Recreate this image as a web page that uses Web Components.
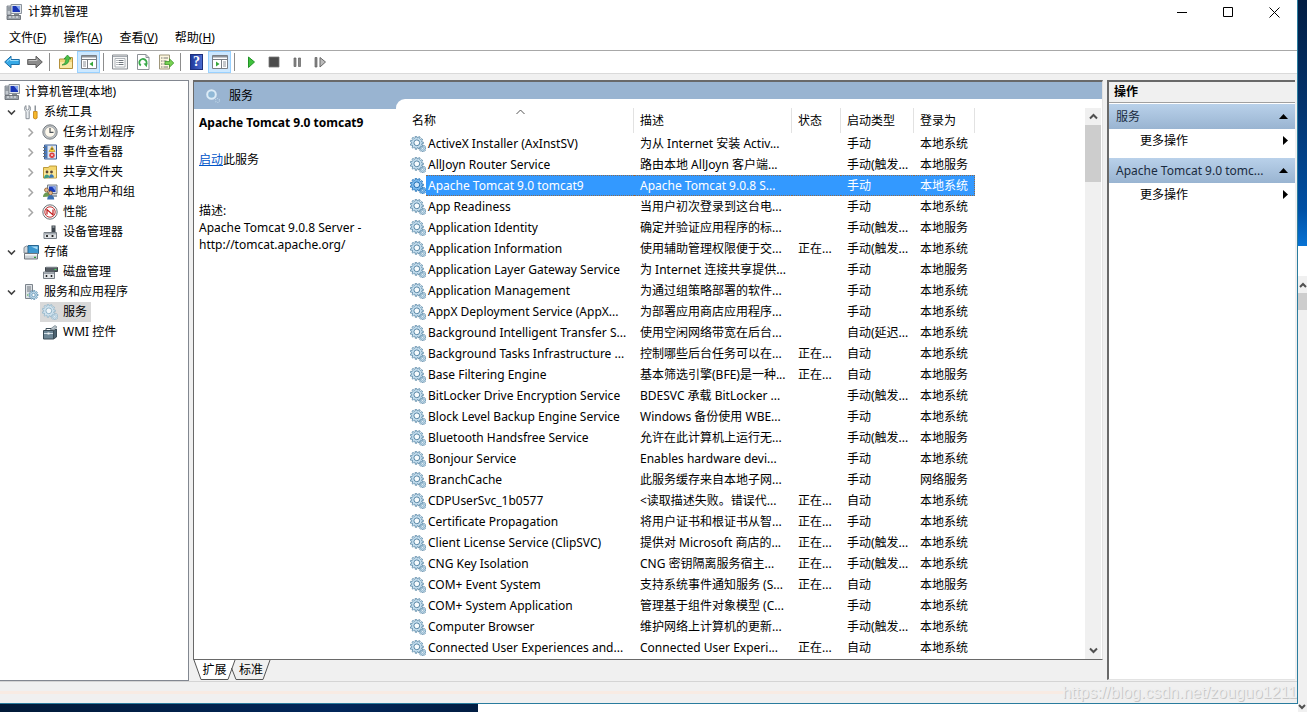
<!DOCTYPE html>
<html lang="zh-CN">
<head>
<meta charset="utf-8">
<title>计算机管理</title>
<style>
  html, body { margin: 0; }
  body {
    font-family: "Noto Sans", "Noto Sans CJK SC", sans-serif;
    font-size: 12px;
    line-height: 16px;
    color: #000;
  }
</style>
</head>
<body>
<mmc-desktop>
  <mmc-window>
    <mmc-titlebar slot="title">计算机管理</mmc-titlebar>
    <mmc-menubar slot="menu">
      <mmc-menu key="F">文件</mmc-menu>
      <mmc-menu key="A">操作</mmc-menu>
      <mmc-menu key="V">查看</mmc-menu>
      <mmc-menu key="H">帮助</mmc-menu>
    </mmc-menubar>
    <mmc-toolbar slot="tools"></mmc-toolbar>
    <mmc-tree slot="tree">
      <mmc-node level="0" icon="computer">计算机管理(本地)</mmc-node>
      <mmc-node level="1" icon="tools" state="open">系统工具</mmc-node>
      <mmc-node level="2" icon="clock" state="closed">任务计划程序</mmc-node>
      <mmc-node level="2" icon="event" state="closed">事件查看器</mmc-node>
      <mmc-node level="2" icon="share" state="closed">共享文件夹</mmc-node>
      <mmc-node level="2" icon="users" state="closed">本地用户和组</mmc-node>
      <mmc-node level="2" icon="perf" state="closed">性能</mmc-node>
      <mmc-node level="2" icon="device">设备管理器</mmc-node>
      <mmc-node level="1" icon="storage" state="open">存储</mmc-node>
      <mmc-node level="2" icon="disk">磁盘管理</mmc-node>
      <mmc-node level="1" icon="apps" state="open">服务和应用程序</mmc-node>
      <mmc-node level="2" icon="gearlight" selected>服务</mmc-node>
      <mmc-node level="2" icon="wmi">WMI 控件</mmc-node>
    </mmc-tree>
    <mmc-result slot="main">
      <mmc-detail slot="detail" name="Apache Tomcat 9.0 tomcat9">Apache Tomcat 9.0.8 Server - http://tomcat.apache.org/</mmc-detail>
      <mmc-services slot="list"></mmc-services>
    </mmc-result>
    <mmc-actions slot="actions">
      <mmc-action-group label="服务">更多操作</mmc-action-group>
      <mmc-action-group label="Apache Tomcat 9.0 tomc...">更多操作</mmc-action-group>
    </mmc-actions>
    <mmc-status slot="status">https://blog.csdn.net/zouguo1211</mmc-status>
  </mmc-window>
</mmc-desktop>

<script>
const gearPath = (cx, cy, r, teeth, depth) => {
  let d = '';
  for (let i = 0; i < teeth * 2; i++) {
    const a0 = (i - 0.4) * Math.PI / teeth, a1 = (i + 0.4) * Math.PI / teeth;
    const q = i % 2 ? r - depth : r;
    d += (i ? 'L' : 'M') + (cx + q * Math.cos(a0)).toFixed(2) + ' ' + (cy + q * Math.sin(a0)).toFixed(2)
       + 'L' + (cx + q * Math.cos(a1)).toFixed(2) + ' ' + (cy + q * Math.sin(a1)).toFixed(2);
  }
  return d + 'Z';
};
const gears = (fill, line, hole) => `
  <path d="${gearPath(12.6, 12.4, 3.5, 8, 1)}" fill="${fill}" stroke="${line}" stroke-width=".7"/>
  <circle cx="12.6" cy="12.4" r="1" fill="${hole}" stroke="${line}" stroke-width=".5"/>
  <path d="${gearPath(6.8, 6.8, 6.6, 11, 1.5)}" fill="${fill}" stroke="${line}" stroke-width=".8"/>
  <circle cx="6.8" cy="6.8" r="2.9" fill="${hole}" stroke="${line}" stroke-width="1"/>`;

const ICONS = {
  computer: `<path d="M1 2h4v9H1z" fill="#c3c9cf" stroke="#6f7780" stroke-width=".8"/><path d="M5 .5h10.500v9H5z" fill="#dfe4ea" stroke="#8b939c"/><path d="M6.500 2h7.500v6H6.500z" fill="#1935b5"/><path d="M10 2h4v5z" fill="#86a6ee"/><path d="M8 10h5v1.500H8z" fill="#7f868d"/><path d="M1 11.500h13.500v4H1z" fill="#9aa1a8" stroke="#5b6168" stroke-width=".8"/><path d="M3 13h2m1.500 0h2m1.500 0h2" stroke="#f3f5f7"/><path d="M1.500 4h3m-3 2h3" stroke="#68717a"/>`,
  tools: `<path d="M3 1.500v3.500l1.500 1L6 5V1.500C8 3 8 6 6.200 7.500v7.200H3V7.500C1 6 1 3 3 1.500z" fill="#e9edf0" stroke="#7d858c" stroke-width=".9"/><path d="M11.500 1.500h1.500v6h-1.500z" fill="#8d9399"/><path d="M10.500 7.500h3.600v6.600q-1.800 1.800-3.600 0z" fill="#f5b72a" stroke="#c07f10" stroke-width=".8"/>`,
  clock: `<circle cx="8" cy="8" r="7.200" fill="#bfc3c6" stroke="#6d7377" stroke-width=".9"/><circle cx="8" cy="8" r="5.300" fill="#fdf8ec" stroke="#8e9499" stroke-width=".7"/><path d="M8 4v4.300h3.500" fill="none" stroke="#4b5259" stroke-width="1.200"/>`,
  event: `<path d="M2.500 1h12v14h-12z" fill="#dfe6f2" stroke="#3b5f96"/><path d="M3 1.500h2.500v13H3z" fill="#4979ba"/><path d="M1 3.500h3m-3 3h3m-3 3h3m-3 3h3" stroke="#68717a"/><path d="M10 2.500l3 5H7z" fill="#ffd83b" stroke="#b88a00" stroke-width=".6"/><path d="M10 4v2" stroke="#222"/><circle cx="10" cy="11.200" r="2.700" fill="#dc3b3b"/><path d="M9 10.200l2 2m0-2l-2 2" stroke="#fff" stroke-width=".8"/>`,
  share: `<path d="M1.500 3.500h5l1-1.500h7v12h-13z" fill="#f4d66b" stroke="#b5912e" stroke-width=".9"/><path d="M2 6h12v7.500H2z" fill="#fbe797"/><circle cx="5" cy="8" r="1.400" fill="#5b4636"/><circle cx="9.500" cy="8" r="1.400" fill="#5b4636"/><path d="M2 14.500c0-5 5-5 5.500-1z" fill="#3f9c86"/><path d="M7 14c0-5 4.500-5 5-.5z" fill="#3a77b8"/>`,
  users: `<path d="M5.500 1h9.500v8.500H5.500z" fill="#d6dde6" stroke="#76808b"/><path d="M7 2.500h6.500V8H7z" fill="#1c3cb8"/><path d="M10 2.500h3.500V7z" fill="#85a5ed"/><path d="M9 10.500h6V13H9z" fill="#9ba3ab"/><circle cx="4.500" cy="6" r="2" fill="#e7b88a" stroke="#7b4d26" stroke-width=".7"/><path d="M1 13c0-6 7-6 7-.5z" fill="#6b9a52"/><circle cx="8.500" cy="9" r="2" fill="#e7b88a" stroke="#7b4d26" stroke-width=".7"/><path d="M5.200 15.500c0-6 7-6 7 0z" fill="#3b6fb2"/>`,
  perf: `<circle cx="8" cy="8" r="7.200" fill="#f5f5f5" stroke="#70757a" stroke-width="1"/><circle cx="8" cy="8" r="5.200" fill="#fff" stroke="#c23535" stroke-width="1"/><path d="M5 10.500V5.500l6 5.500V5.500" fill="none" stroke="#c01818" stroke-width="1.200"/>`,
  device: `<path d="M9.500 1.500h4v7h-4z" fill="#3d444b"/><path d="M10.500 3h2" stroke="#c8ced4"/><path d="M2 8.500h12.500v6H2z" fill="#e1e4e7" stroke="#777e85"/><path d="M2.500 9h11.500v1.500H2.500z" fill="#a4abb1"/><path d="M5 11v2m5.500-2v2" stroke="#222" stroke-width="1.800"/>`,
  storage: `<path d="M1 3.500q2.500-3 5 0V9H1z" fill="#d4d8dc" stroke="#868d94"/><path d="M5 1.500h10.500v8H5z" fill="#3c97cf" stroke="#286691"/><path d="M8 2.500h6.500v3z" fill="#a9dcf5"/><path d="M1.500 9.500h13v5.500h-13z" fill="#ccd1d6" stroke="#70777e"/><path d="M2 10h12v1.500H2z" fill="#f6f8f9"/><path d="M11 13.300h2" stroke="#2f9d3a" stroke-width="1.300"/>`,
  disk: `<path d="M3.500 3.500h12v4h-12z" fill="#555c63" stroke="#3d4349"/><path d="M4 3h11" stroke="#b7bdc3"/><path d="M12.500 5.500h2" stroke="#4bd15a" stroke-width="1.200"/><path d="M1.500 8h11v6.500h-11z" fill="#e2e5e8" stroke="#777e85"/><path d="M2 8.500h10V10H2z" fill="#9aa1a8"/><path d="M4.500 11v2m5-2v2" stroke="#222" stroke-width="1.500"/>`,
  apps: `<path d="M2.500.500h7v14h-7z" fill="#dde1e5" stroke="#7c848c"/><path d="M4 3h4M4 5h4M4 7h4" stroke="#6e767e"/><path d="M4 11h1.500" stroke="#3aa648"/><path d="${gearPath(10.500, 11, 4.600, 9, 1.100)}" fill="#bcd8ea" stroke="#5f8fae" stroke-width=".8"/><circle cx="10.500" cy="11" r="1.700" fill="#fff" stroke="#5f8fae" stroke-width=".8"/>`,
  wmi: `<path d="M1.500 6.500h10V15h-10z" fill="#6e8796" stroke="#3a4b56"/><path d="M4 6.500V4.500h5v2" fill="none" stroke="#3a4b56"/><path d="M2 9.500h9" stroke="#d3e0e8"/><path d="M11.500 6.500L14.500 5v8l-3 2z" fill="#4b6270" stroke="#3a4b56"/><path d="M5.500 8.500h2v2h-2z" fill="#f2f4f5"/><path d="M9 4.500l4-3 2 1.500-4 3z" fill="#b9c4cb" stroke="#6f7c85" stroke-width=".7"/>`,
  gear: gears('#c5dfef', '#5b88a6', '#f7fbfd'),
  gearselected: gears('#7dbcf0', '#1f6fb4', '#cfe7fb'),
  gearlight: gears('#cfe2ee', '#93b5c9', '#f0f5f8'),
  gearhead: `<circle cx="6.500" cy="6.500" r="4.300" fill="#8fb8d6" stroke="#dcebf6" stroke-width="2"/><circle cx="12.500" cy="12.500" r="2" fill="none" stroke="#bcd3e6" stroke-width="1.200" stroke-dasharray="1 1"/>`,
  back: `<path d="M.7 8L7 2.200v3.300h8.300v5H7v3.300z" fill="#36a9e6" stroke="#1b6ea8"/><path d="M3 7.500L6.500 4.500v2h8" fill="none" stroke="#9bdcfb"/>`,
  forward: `<path d="M15.300 8L9 2.200v3.300H.7v5H9v3.300z" fill="#8b8b8b" stroke="#5d5d5d"/><path d="M1.700 6.500h8.300v-2" fill="none" stroke="#c2c2c2"/>`,
  up: `<path d="M1.500 5h5l1-1.500h7v11h-13z" fill="#f3d57a" stroke="#b4913c"/><path d="M2 8h12v6H2z" fill="#fae9a5"/><path d="M4 11q4-1 4-6H6L9.500 1 13 5h-2q0 6-7 6z" fill="#4cc04a" stroke="#258a2c" stroke-width=".7"/>`,
  paneltree: `<path d="M.5 1.500h15v13H.5z" fill="#fff" stroke="#7a7f85"/><path d="M1 2h14v1.500H1z" fill="#8c9298"/><path d="M1 5.500h14M6.500 6v8.500" stroke="#7a7f85"/><path d="M2 8h3m-3 2h3m-3 2h3" stroke="#8c9298"/><path d="M12 7.500v5L8.500 10z" fill="#36a83b"/>`,
  panelright: `<path d="M.5 1.500h15v13H.5z" fill="#fff" stroke="#7a7f85"/><path d="M1 2h14v1.500H1z" fill="#8c9298"/><path d="M1 5.500h14M9.500 6v8.500" stroke="#7a7f85"/><path d="M11 8h3m-3 2h3m-3 2h3" stroke="#8c9298"/><path d="M4 7.500v5L7.500 10z" fill="#36a83b"/>`,
  props: `<path d="M.5 1h15v14H.5z" fill="#f5f5f5" stroke="#878c91"/><path d="M1 2.500h14" stroke="#a5abb1"/><path d="M3 4.500h10v8.500H3z" fill="#fff" stroke="#9da3a9" stroke-width=".8"/><path d="M4.500 6.500h1m1 0h5m-7 2h1m1 0h5m-7 2h1m1 0h5" stroke="#6f767d"/>`,
  refresh: `<path d="M2.500.500h8.500l3 3v12H2.500z" fill="#fff" stroke="#8c9196"/><path d="M11 .500v3h3" fill="none" stroke="#8c9196"/><path d="M5.800 11.500a3.600 3.600 0 1 1 5.200-1" fill="none" stroke="#39a94a" stroke-width="1.900"/><path d="M8.500 9.500l4-.3-.8 4z" fill="#39a94a"/>`,
  export: `<path d="M1.500 1h10v14h-10z" fill="#fdf7df" stroke="#9f977b"/><path d="M3 4h1.500m1 0h4.500M3 7h1.500m1 0h3M3 10h1.500m1 0h3M3 13h1.500m1 0h4.500" stroke="#777"/><path d="M7 7.500h4.500V4.800L15.800 9l-4.300 4.200v-2.700H7z" fill="#78d152" stroke="#3c962b" stroke-width=".8"/>`,
  play: `<path d="M5.500 3v10.500L11.500 8z" fill="#3fc13c" stroke="#229227"/>`,
  stop: `<path d="M3 3h10v10H3z" fill="#4b4b4b" stroke="#777" stroke-width=".8"/>`,
  pause: `<path d="M5 4h2v8.500H5zM9.500 4h2v8.500h-2z" fill="#888" stroke="#606060" stroke-width=".7"/>`,
  restart: `<path d="M3 3.500h2v9.500H3z" fill="#888" stroke="#606060" stroke-width=".7"/><path d="M8 3.500v9.500L13.500 8z" fill="#bbb" stroke="#666"/>`
};

const define = (name, css, html, setup) => {
  const template = document.createElement('template');
  template.innerHTML = `<style>:host,*{box-sizing:border-box}button{font:inherit;color:inherit;border:0;background:none;padding:0;margin:0}${css}</style>${html}`;
  customElements.define(name, class extends HTMLElement {
    connectedCallback() {
      if (this.shadowRoot) return;
      const root = this.attachShadow({ mode: 'open' });
      root.append(template.content.cloneNode(true));
      if (setup) setup(this, root);
    }
  });
};

define('mmc-icon', `:host{display:block;width:16px;height:16px;flex:none}svg{display:block;width:100%;height:100%}.help{height:16px;width:13px;margin:0 auto;background:linear-gradient(90deg,#203a9c,#4a6bd0);border:1px solid #1d2f7c;color:#fff;font:bold 14px/14px "Liberation Serif",serif;text-align:center}`, ``,
  (el, root) => {
    const box = document.createElement('div');
    const name = el.getAttribute('name');
    box.innerHTML = name === 'help' ? '<div class="help">?</div>'
      : `<svg viewBox="0 0 16 16" aria-hidden="true">${ICONS[name]}</svg>`;
    root.append(box);
  });

define('mmc-desktop', `
  :host{display:grid;grid-template-columns:minmax(0,1fr) 9px;grid-template-rows:1fr 8px;min-height:100vh;background:#fff}
  .side{display:flex;flex-direction:column;background:#f0f0f0}
  .sky{flex:none;height:246px;background:linear-gradient(#021d42,#04356f 45%,#0050a4 85%,#0873d4)}
  .gap{flex:none;height:30px;background:#fff}
  .up{flex:none;height:17px;display:grid;place-items:center}
  .thumb{flex:none;height:17px;background:#cdcdcd}
  svg{display:block}
  .bottom{width:478px;background:linear-gradient(90deg,#011a38,#01265a 70%,#011d42)}
  .corner{background:#f0f0f0}`, `
  <slot></slot>
  <div class="side"><div class="sky"></div><div class="gap"></div>
    <div class="up"><svg width="8" height="6"><path d="M1 5l3-3 3 3" fill="none" stroke="#505050" stroke-width="2"/></svg></div>
    <div class="thumb"></div></div>
  <div class="bottom"></div>
  <div class="corner"><svg width="8" height="6"><path d="M1 1l3 3 3-3" fill="none" stroke="#505050" stroke-width="2"/></svg></div>`);

define('mmc-window', `
  :host{display:flex;flex-direction:column;background:#f0f0f0;border-right:1px solid #2a7c9e;border-bottom:1px solid #2a7c9e;min-width:0}
  .body{flex:1;display:grid;grid-template-columns:189px minmax(0,1fr) 188px;column-gap:4px;padding:6px 2px 0 0}`, `
  <slot name="title"></slot><slot name="menu"></slot><slot name="tools"></slot>
  <div class="body"><slot name="tree"></slot><slot name="main"></slot><slot name="actions"></slot></div>
  <slot name="status"></slot>`);

define('mmc-titlebar', `
  :host{display:flex;align-items:center;height:24px;background:#fff;padding-left:6px}
  .name{flex:1;padding-left:6px}
  button{width:46px;height:24px;display:grid;place-items:center}`, `
  <mmc-icon name="computer"></mmc-icon><span class="name"><slot></slot></span>
  <button aria-label="最小化"><svg width="11" height="11"><path d="M0 5.500h10" stroke="#000"/></svg></button>
  <button aria-label="最大化"><svg width="11" height="11"><path d="M.5.500h9v9h-9z" fill="none" stroke="#000"/></svg></button>
  <button aria-label="关闭"><svg width="11" height="11"><path d="M.5.500l10 10m0-10l-10 10" stroke="#000"/></svg></button>`);

define('mmc-menubar', `:host{display:flex;align-items:center;gap:17px;height:27px;padding:2px 0 0 9px;background:#fff;border-bottom:1px solid #a8a8a8}`, `<slot></slot>`);
define('mmc-menu', `:host{display:block}`, `<button><slot></slot>(<u></u>)</button>`,
  (el, root) => { root.querySelector('u').textContent = el.getAttribute('key'); });

define('mmc-toolbar', `
  :host{display:flex;align-items:center;height:23px;background:#fff;border-bottom:1px solid #dadada}
  button{display:grid;place-items:center;width:23px;height:22px}
  button.on{background:#cce8ff;border:1px solid #99d1ff}
  i{width:1px;height:18px;background:#8d8d8d;margin:0 4px 0 3px}`, ``,
  (el, root) => {
    const items = [['back', '后退'], ['forward', '前进'], '|', ['up', '上一级'], ['paneltree', '显示/隐藏控制台树', 1], '|',
      ['props', '属性'], ['refresh', '刷新'], ['export', '导出列表'], '|', ['help', '帮助'], ['panelright', '显示/隐藏操作窗格', 1], '|',
      ['play', '启动服务'], ['stop', '停止服务'], ['pause', '暂停服务'], ['restart', '重新启动服务']];
    const holder = document.createElement('template');
    holder.innerHTML = items.map(t => t === '|' ? '<i></i>'
      : `<button class="${t[2] ? 'on' : ''}" aria-label="${t[1]}"><mmc-icon name="${t[0]}"></mmc-icon></button>`).join('');
    root.append(holder.content);
  });

define('mmc-tree', `:host{display:block;background:#fff;border-top:1px solid #828790;border-right:1px solid #828790;border-bottom:1px solid #828790;padding-top:1px}`, `<slot></slot>`);
define('mmc-node', `
  :host{display:flex;align-items:center;height:20px}
  :host([level="0"]){padding-left:2px}
  :host([level="1"]){padding-left:7px}
  :host([level="2"]){padding-left:26px}
  .arrow{width:9px;height:9px;margin-right:5px;flex:none}
  :host([level="0"]) .arrow{display:none}
  .row{display:flex;align-items:center;gap:5px;height:20px;padding:0 4px 0 2px}
  :host([selected]) .row{background:#d9d9d9}`, `
  <svg class="arrow" viewBox="0 0 9 9"></svg><div class="row"><span><slot></slot></span></div>`,
  (el, root) => {
    const icon = document.createElement('mmc-icon');
    icon.setAttribute('name', el.getAttribute('icon'));
    root.querySelector('.row').prepend(icon);
    const state = el.getAttribute('state');
    root.querySelector('.arrow').innerHTML = state === 'open' ? '<path d="M1 2.500l3.500 3.500L8 2.500" fill="none" stroke="#404040" stroke-width="1.600"/>'
      : state === 'closed' ? '<path d="M2.500.500l4 4-4 4" fill="none" stroke="#a6a6a6" stroke-width="1.500"/>' : '';
  });

define('mmc-result', `
  :host{display:flex;flex-direction:column;min-width:0}
  .pane{flex:1;display:grid;grid-template-columns:202px minmax(0,1fr);background:#99b4d1;border:2px solid #696969;border-right:1px solid #e3e3e3;border-bottom:1px solid #696969;border-left-width:1px}
  .left{display:flex;flex-direction:column}
  .head{display:flex;align-items:center;gap:8px;height:27px;padding-left:11px}
  ::slotted([slot=detail]){flex:1}
  .right{margin-top:17px;background:#fff;border-top-left-radius:9px;overflow:hidden}
  .tabs{height:21px;display:flex}
  .tabs svg{position:absolute;inset:0;z-index:-1}
  .tabs button{position:relative;isolation:isolate;height:20px;width:43px;text-align:center}
  .tabs button + button{margin-left:-6px;width:42px}`, `
  <div class="pane">
    <div class="left"><div class="head"><mmc-icon name="gearhead"></mmc-icon><span>服务</span></div><slot name="detail"></slot></div>
    <div class="right"><slot name="list"></slot></div>
  </div>
  <div class="tabs" role="tablist">
    <button role="tab" aria-selected="true"><svg width="43" height="20"><path d="M1 0l7 19.500h27L42 0z" fill="#fff"/><path d="M1 0l7 19.500h27L42 0" fill="none" stroke="#555"/></svg>扩展</button>
    <button role="tab"><svg width="42" height="20"><path d="M1.500 8l4.500 11.500h27L40 0" fill="none" stroke="#555"/></svg>标准</button>
  </div>`);

define('mmc-detail', `
  :host{display:flex;flex-direction:column;background:#fff;padding:5px 12px 0 5px}
  h2{margin:0 0 19px;font-size:12px;line-height:18px}
  p{margin:0;line-height:17px}
  .start{margin-bottom:34px}
  a{color:#0054c8}`, `
  <h2></h2><p class="start"><a href="#start">启动</a>此服务</p><p>描述:</p><p><slot></slot></p>`,
  (el, root) => { root.querySelector('h2').textContent = el.getAttribute('name'); });

const S = '本地系统', L = '本地服务', RUN = '正在...', M = '手动', A = '自动', MT = '手动(触发...';
const SERVICES = [
  ['ActiveX Installer (AxInstSV)', '为从 Internet 安装 Activ...', '', M, S],
  ['AllJoyn Router Service', '路由本地 AllJoyn 客户端...', '', MT, L],
  ['Apache Tomcat 9.0 tomcat9', 'Apache Tomcat 9.0.8 S...', '', M, S],
  ['App Readiness', '当用户初次登录到这台电...', '', M, S],
  ['Application Identity', '确定并验证应用程序的标...', '', MT, L],
  ['Application Information', '使用辅助管理权限便于交...', RUN, MT, S],
  ['Application Layer Gateway Service', '为 Internet 连接共享提供...', '', M, L],
  ['Application Management', '为通过组策略部署的软件...', '', M, S],
  ['AppX Deployment Service (AppX...', '为部署应用商店应用程序...', '', M, S],
  ['Background Intelligent Transfer S...', '使用空闲网络带宽在后台...', '', '自动(延迟...', S],
  ['Background Tasks Infrastructure ...', '控制哪些后台任务可以在...', RUN, A, S],
  ['Base Filtering Engine', '基本筛选引擎(BFE)是一种...', RUN, A, L],
  ['BitLocker Drive Encryption Service', 'BDESVC 承载 BitLocker ...', '', MT, S],
  ['Block Level Backup Engine Service', 'Windows 备份使用 WBE...', '', M, S],
  ['Bluetooth Handsfree Service', '允许在此计算机上运行无...', '', MT, L],
  ['Bonjour Service', 'Enables hardware devi...', '', M, S],
  ['BranchCache', '此服务缓存来自本地子网...', '', M, '网络服务'],
  ['CDPUserSvc_1b0577', '<读取描述失败。错误代...', RUN, A, S],
  ['Certificate Propagation', '将用户证书和根证书从智...', RUN, M, S],
  ['Client License Service (ClipSVC)', '提供对 Microsoft 商店的...', RUN, MT, S],
  ['CNG Key Isolation', 'CNG 密钥隔离服务宿主...', RUN, MT, S],
  ['COM+ Event System', '支持系统事件通知服务 (S...', RUN, A, L],
  ['COM+ System Application', '管理基于组件对象模型 (C...', '', M, S],
  ['Computer Browser', '维护网络上计算机的更新...', '', MT, S],
  ['Connected User Experiences and...', 'Connected User Experi...', RUN, A, S]
];

define('mmc-services', `
  :host{display:flex;justify-content:space-between;align-items:stretch;padding:9px 1px 0 14px;height:100%}
  table{border-collapse:separate;border-spacing:0;table-layout:fixed;width:565px;align-self:flex-start;white-space:nowrap}
  col.n{width:224px}col.d{width:158px}col.s{width:49px}col.t{width:73px}col.l{width:61px}
  th{position:relative;height:25px;font-weight:normal;text-align:left;padding:0 0 0 6px;border-right:1px solid #e2e2e2}
  th:first-child{padding-left:2px}
  th svg{position:absolute;left:106px;top:1px}
  td{height:21px;padding:0 0 0 6px}
  td:first-child{padding:0}
  .name{display:flex;height:21px;align-items:center}
  .name span{flex:1;padding-left:2px;line-height:21px;height:21px}
  tr.sel{color:#fff}
  tr.sel td:not(:first-child),tr.sel .name span{background:#39f;border-top:1px dotted #8a6a50;border-bottom:1px dotted #8a6a50}
  tr.sel .name span{line-height:19px}
  tr.sel td:last-child{border-right:1px dotted #8a6a50}
  .bar{width:16px;display:flex;flex-direction:column;background:#f0f0f0}
  .bar b{display:grid;place-items:center;height:17px}
  .thumb{height:57px;background:#cdcdcd}
  .down{margin-top:auto}`, `
  <table>
    <colgroup><col class="n"><col class="d"><col class="s"><col class="t"><col class="l"></colgroup>
    <thead><tr><th>名称<svg width="9" height="6"><path d="M.5 5l4-4 4 4" fill="none" stroke="#555"/></svg></th><th>描述</th><th>状态</th><th>启动类型</th><th>登录为</th></tr></thead>
    <tbody></tbody>
  </table>
  <div class="bar"><b><svg width="9" height="7"><path d="M1 5.500L4.500 2 8 5.500" fill="none" stroke="#505050" stroke-width="2"/></svg></b>
    <div class="thumb"></div>
    <b class="down"><svg width="9" height="7"><path d="M1 1.500L4.500 5 8 1.500" fill="none" stroke="#505050" stroke-width="2"/></svg></b></div>`,
  (el, root) => {
    const body = root.querySelector('tbody');
    SERVICES.forEach((cells, i) => {
      const tr = body.insertRow();
      if (i === 2) tr.className = 'sel';
      cells.forEach((text, c) => {
        const td = tr.insertCell();
        if (c) { td.textContent = text; return; }
        td.innerHTML = `<div class="name"><mmc-icon name="${i === 2 ? 'gearselected' : 'gear'}"></mmc-icon><span></span></div>`;
        td.querySelector('span').textContent = text;
      });
    });
  });

define('mmc-actions', `
  :host{display:flex;flex-direction:column;background:#fff;border-top:2px solid #696969;border-left:2px solid #696969;border-bottom:1px solid #e3e3e3;gap:4px;margin-bottom:1px}
  h2{margin:0 0 -3px;height:21px;padding-left:5px;font-size:12px;line-height:20px;background:#f0f0f0;border-bottom:1px solid #a0a0a0}`, `
  <h2>操作</h2><slot></slot>`);
define('mmc-action-group', `
  :host{display:block}
  button{display:flex;align-items:center;justify-content:space-between;width:100%;height:25px;padding:0 7px 0 7px;text-align:left}
  .title{background:linear-gradient(#b9d1ea,#99b4d1);color:#1a2b40}
  .item{padding:0 7px 2px 31px}
  svg{display:block}`, `
  <button class="title"><span></span><svg width="9" height="5"><path d="M0 5l4.500-5L9 5z"/></svg></button>
  <button class="item"><slot></slot><svg width="5" height="9"><path d="M0 0l5 4.500L0 9z"/></svg></button>`,
  (el, root) => { root.querySelector('span').textContent = el.getAttribute('label'); });

define('mmc-status', `
  :host{display:flex;justify-content:flex-end;align-items:center;height:22px;border-top:1px solid #d4d4d4;
    background:linear-gradient(transparent 9px,#f8ebe3 9px,#f8ebe3 12px,transparent 12px) 0 0/1066px 100% no-repeat,#f0f0f0;overflow:hidden;white-space:nowrap}
  span{font:16px/20px "Liberation Sans",sans-serif;color:#eee;text-shadow:1px 1px 0 #c8c8c8}`, `<span><slot></slot></span>`);
</script>
</body>
</html>
